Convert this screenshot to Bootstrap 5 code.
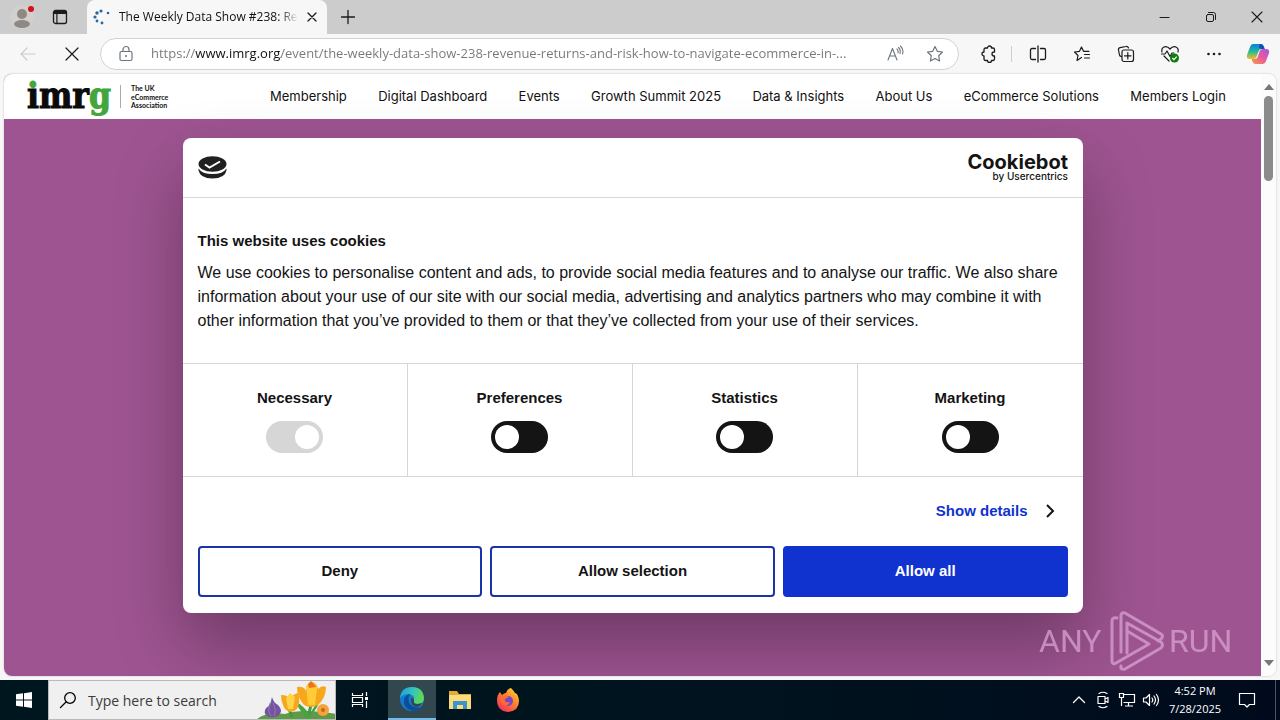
<!DOCTYPE html>
<html lang="en">
<head>
<meta charset="utf-8">
<meta name="viewport" content="width=device-width, initial-scale=1">
<title>The Weekly Data Show #238</title>
<link href="https://cdn.jsdelivr.net/npm/bootstrap@5.3.0/dist/css/bootstrap.min.css" rel="stylesheet">
<style>
  body { font-family: "Open Sans", "Noto Sans", sans-serif; font-size: 12px; background: #f7f7f7; color: #111; }
  button, input { font-family: inherit; }
  svg { display: block; flex: none; }
  .icon-btn { border: 0; background: none; padding: 0; display: flex; align-items: center; justify-content: center; color: #1b1b1b; flex: none; }
  .line { fill: none; stroke: currentColor; stroke-linecap: round; stroke-linejoin: round; }

  /* window chrome */
  .titlebar { height: 34px; background: #ccc; }
  .browser-tab { width: 240px; height: 34px; background: #f7f7f7; border-radius: 8px 8px 0 0; padding: 0 8px 0 6px; margin: 0 8px 0 19px; }
  .tab-title { width: 179px; overflow: hidden; white-space: nowrap; -webkit-mask-image: linear-gradient(90deg, #000 90%, transparent); mask-image: linear-gradient(90deg, #000 90%, transparent); }
  .win-btn { width: 46px; height: 34px; }
  .toolbar { height: 40px; }
  .address { height: 32px; border: 1px solid #d2d2d2; border-radius: 16px; background: #fff; padding: 0 14px 0 16px; margin-left: 20px; }
  .address input { border: 0; outline: 0; padding: 0; font-size: 13px; text-overflow: ellipsis; min-width: 0;
    color: transparent; background: linear-gradient(90deg, #767676 44px, #111 44px, #111 130px, #767676 130px); -webkit-background-clip: text; background-clip: text; }
  .star { margin-left: 22px; }
  .tool { width: 44px; height: 32px; }
  .tool-sep { width: 1px; height: 16px; background: #cfcfcf; }

  /* page */
  .viewport { margin: 0 4px 4px; border-radius: 8px; overflow: hidden; background: #fff; box-shadow: 0 0 2px rgba(0,0,0,.25); min-height: 0; }
  .site { background: #9e5491; overflow: hidden; }
  .site-nav { height: 45px; background: #fff; padding: 0 35px 0 22px; }
  .site-links { flex: 0 1 956px; }
  .site-links a { font-family: Inter, sans-serif; font-size: 13px; color: #111; text-decoration: none; white-space: nowrap; }
  .scroller { width: 15px; background: #fcfcfc; }
  .thumb { width: 9px; height: 85px; border-radius: 5px; background: #8b8b8b; }
  .watermark { right: 29px; bottom: 3px; color: #d9a3d2; opacity: .75; }

  /* consent dialog */
  .consent { width: 900px; max-width: 96%; background: #fff; border-radius: 8px; box-shadow: 0 32px 68px rgba(0,0,0,.3); font-family: "Liberation Sans", Arial, sans-serif; color: #141414; font-size: 15px; line-height: 24px; }
  .consent-head { height: 60px; padding: 0 15px; }
  .rule-b { border-bottom: 1px solid #d6d6d6; }
  .consent-body { padding: 31px 15px 30px; }
  .consent-body h2 { font-size: 15px; line-height: 24px; font-weight: 700; margin: 0 0 8px; }
  .consent-body p { font-size: 16px; margin: 0; }
  .choice { padding: 22px 0 23px; }
  .choice:not(:last-child) { border-right: 1px solid #d6d6d6; }
  .choice label { font-weight: 700; margin-bottom: 11px; }
  .form-switch .form-check-input.big-switch { width: 57px; height: 32px; margin: 0; float: none; border: 0; border-radius: 16px; background-color: #141414; opacity: 1;
    --bs-form-switch-bg: url("data:image/svg+xml,%3csvg xmlns='http://www.w3.org/2000/svg' viewBox='-4 -4 8 8'%3e%3ccircle r='3' fill='%23fff'/%3e%3c/svg%3e"); }
  .form-switch .form-check-input.big-switch:disabled { background-color: #d6d6d6; }
  .details { height: 69px; padding: 0 27px 0 15px; }
  .details a { color: #1032cf; font-weight: 700; text-decoration: none; }
  .consent-actions { padding: 0 15px 16px; gap: 8px; }
  .consent-actions .btn { flex: 1 1 0; height: 51px; border: 2px solid #1a33a8; border-radius: 4px; font-size: 15px; font-weight: 700; color: #141414; padding: 0; }
  .consent-actions .btn-all { background: #1032cf; border-color: #1032cf; color: #fff; }

  /* taskbar */
  .taskbar { height: 40px; background: linear-gradient(90deg, #00161f, #00131e 60%, #000a1c); color: #fff; }
  .taskbar .icon-btn { width: 48px; height: 40px; color: #fff; }
  .taskbar .running { background: #33474f; border-bottom: 2px solid #76b9ed; }
  .task-search { width: 288px; background: #f0f0f0; border: 1px solid #b9b9b9; padding-left: 10px; overflow: hidden; }
  .task-search input { border: 0; outline: 0; background: none; font-size: 14px; padding: 0; margin-left: 11px; min-width: 0; }
  .task-search input::placeholder { color: #3b3b3b; opacity: 1; }
  .taskbar .tray { width: 24px; }
  .clock { width: 64px; line-height: 18px; font-size: 11px; }
  .peek { border-left: 1px solid #4a5563; width: 5px; }
</style>
</head>
<body class="vh-100 d-flex flex-column overflow-hidden">

<header>
  <div class="titlebar d-flex align-items-center">
    <button class="icon-btn ms-2" aria-label="Profile"><svg width="28" height="30" viewBox="0 0 28 30"><circle cx="14" cy="15" r="12" fill="#d3cfcc"/><circle cx="14" cy="12" r="5" fill="#8e8985"/><ellipse cx="14" cy="22" rx="8" ry="4" fill="#8e8985"/><circle cx="23" cy="7" r="3" fill="#d80f1c"/></svg></button>
    <button class="icon-btn ms-3" aria-label="Tab actions"><svg width="16" height="16" viewBox="0 0 16 16"><rect class="line" x="1.500" y="1.500" width="13" height="13" rx="2" stroke-width="1.300"/><path d="M2 2h12v3H5.500v9H4.300V5H2z" fill="currentColor"/></svg></button>
    <div class="browser-tab d-flex align-items-center">
      <svg width="18" height="18" viewBox="0 0 18 18" fill="#2467a8"><circle cx="8" cy="3" r="1.600"/><circle cx="4" cy="5" r="1.700"/><circle cx="2" cy="9" r="1.600"/><circle cx="4" cy="13" r="1.400"/><circle cx="15" cy="5" r="1.300"/><circle cx="9" cy="15" r="1.400"/></svg>
      <span class="tab-title ms-2">The Weekly Data Show #238: Reve</span>
      <button class="icon-btn ms-2" aria-label="Close tab"><svg width="12" height="12" viewBox="0 0 12 12"><path class="line" stroke-width="1.300" d="M2 2l8 8M10 2l-8 8"/></svg></button>
    </div>
    <button class="icon-btn ms-1" aria-label="New tab"><svg width="18" height="18" viewBox="0 0 18 18"><path class="line" stroke-width="1.300" d="M9 2.500v13M2.500 9h13"/></svg></button>
    <div class="d-flex ms-auto">
      <button class="icon-btn win-btn" aria-label="Minimize"><svg width="12" height="12" viewBox="0 0 12 12"><path class="line" d="M1 6.500h9"/></svg></button>
      <button class="icon-btn win-btn" aria-label="Restore"><svg width="12" height="12" viewBox="0 0 12 12"><g class="line"><rect x="1.500" y="3.500" width="7" height="7" rx="1.500"/><path d="M3.500 1.500H8.500a2 2 0 0 1 2 2V8.500"/></g></svg></button>
      <button class="icon-btn win-btn" aria-label="Close"><svg width="12" height="12" viewBox="0 0 12 12"><path class="line" stroke-width="1.100" d="M1 1l10 10M11 1L1 11"/></svg></button>
    </div>
  </div>
  <div class="toolbar d-flex align-items-center">
    <button class="icon-btn ms-3" aria-label="Back"><svg width="24" height="20" viewBox="0 0 24 20"><path fill="none" stroke="#cbcbcb" stroke-linecap="round" stroke-width="1.200" d="M19 10H5M11 4l-6 6 6 6"/></svg></button>
    <button class="icon-btn ms-4" aria-label="Stop"><svg width="16" height="16" viewBox="0 0 16 16"><path class="line" stroke-width="1.200" d="M2 2l12 12M14 2L2 14"/></svg></button>
    <div class="address d-flex align-items-center flex-grow-1">
      <svg class="text-secondary" width="18" height="18" viewBox="0 0 18 18"><g class="line" stroke-width="1.200"><rect x="3" y="6.500" width="12" height="9" rx="1.500"/><path d="M6 6.500V4.500a3 3 0 0 1 6 0v2"/></g><circle cx="9" cy="11" r="1" fill="currentColor"/></svg>
      <input class="flex-grow-1 ms-3" type="text" aria-label="Address" value="https://www.imrg.org/event/the-weekly-data-show-238-revenue-returns-and-risk-how-to-navigate-ecommerce-in-...">
      <button class="icon-btn text-secondary ms-2" aria-label="Read aloud"><svg width="18" height="18" viewBox="0 0 18 18"><path class="line" stroke-width="1.100" d="M2 15L6.500 3.500 11 15M3.500 11h6M11 4q1.500 1.500 1 4M12.500 2.500q2.500 2 1.500 6M14.500 1q3.500 3.500 2 8"/></svg></button>
      <button class="icon-btn text-secondary star" aria-label="Favorite"><svg width="18" height="18" viewBox="0 0 18 18"><path class="line" stroke-width="1.200" d="M9 1.500l2.300 4.800 5.200.7-3.800 3.700.9 5.300L9 13.500 4.400 16l.9-5.300L1.500 7l5.200-.7z"/></svg></button>
    </div>
    <button class="icon-btn tool ms-2" aria-label="Extensions"><svg width="18" height="18" viewBox="0 0 18 18"><path class="line" stroke-width="1.300" d="M5.500 3h2a2 2 0 0 1 4 0H13a1.500 1.500 0 0 1 1.500 1.500V7H14a2 2 0 0 0 0 4h.5v3a1.500 1.500 0 0 1-1.500 1.500h-1.500a2 2 0 0 1-4 0h-2A1.500 1.500 0 0 1 4 14v-3a2 2 0 0 1 0-4V4.500A1.500 1.500 0 0 1 5.500 3z"/></svg></button>
    <span class="tool-sep"></span>
    <button class="icon-btn tool ms-1" aria-label="Split screen"><svg width="18" height="18" viewBox="0 0 18 18"><path class="line" stroke-width="1.300" d="M9 1v16M6.500 3.500H3a1.500 1.500 0 0 0-1.500 1.500v8A1.500 1.500 0 0 0 3 14.500h3.500M11.500 3.500H15A1.500 1.500 0 0 1 16.500 5v8a1.500 1.500 0 0 1-1.500 1.500h-3.500"/></svg></button>
    <button class="icon-btn tool" aria-label="Favorites"><svg width="18" height="18" viewBox="0 0 18 18"><path class="line" stroke-width="1.200" d="M8.500 12.500L4 15.500l1-5L1.500 7l5-.7L8.500 2l2 4.300H16M11.500 9.500h5M11.500 13h5"/></svg></button>
    <button class="icon-btn tool" aria-label="Collections"><svg width="18" height="18" viewBox="0 0 18 18"><path class="line" stroke-width="1.200" d="M4.500 11.500a2 2 0 0 1-2-1.500L1.500 5a2 2 0 0 1 1.500-2.300l6-1.200A2 2 0 0 1 11.500 3M7 5h7.500A2 2 0 0 1 16.500 7v7.500a2 2 0 0 1-2 2H7a2 2 0 0 1-2-2V7a2 2 0 0 1 2-2zM10.800 7.500v6.500M7.500 10.800H14"/></svg></button>
    <button class="icon-btn tool" aria-label="Browser essentials"><svg width="20" height="18" viewBox="0 0 20 18"><path class="line" stroke-width="1.200" d="M2 7Q1 3 4.500 1.800 7.500 1 10 4q2.500-3 5.500-2.200Q19 3 18 7M1.500 9H5l2-3 3 5.500L12 8h2M4 11l5 5"/><circle cx="14.500" cy="13" r="4.500" fill="#107c10"/><path d="M12.300 13l1.600 1.600 2.800-3" fill="none" stroke="#fff" stroke-width="1.200"/></svg></button>
    <button class="icon-btn tool" aria-label="Settings and more"><svg width="16" height="16" viewBox="0 0 16 16" fill="currentColor"><circle cx="2.500" cy="8" r="1.300"/><circle cx="8" cy="8" r="1.300"/><circle cx="13.500" cy="8" r="1.300"/></svg></button>
    <button class="icon-btn tool" aria-label="Copilot"><svg width="24" height="22" viewBox="0 0 24 22"><defs><linearGradient id="cpA" x1="0" y1="0" x2="0" y2="1"><stop offset="0" stop-color="#0a7fe0"/><stop offset=".5" stop-color="#25b99a"/><stop offset="1" stop-color="#f4c21c"/></linearGradient><linearGradient id="cpB" x1="1" y1="0" x2="0" y2="1"><stop offset="0" stop-color="#a257e8"/><stop offset=".5" stop-color="#ea5a9b"/><stop offset="1" stop-color="#fb9a4a"/></linearGradient></defs><path fill="url(#cpA)" d="M7 1h8q2 0 3 3l.6 2h-3.200q-2 0-2.700 2L10.500 14q-.8 2-3 2H4q-4 0-3-4L4 4q1-3 3-3z"/><path fill="url(#cpB)" d="M17 21H9q-2 0-2.700-3L5.700 16h3.300q2 0 2.700-2L13.700 8q.8-2 3-2H20q4 0 3 4l-3 8q-1 3-3 3z"/><path fill="#174eb5" d="M14 1h1q2 0 3 3l.6 2h-3.200q-2 0-2.600-2z"/></svg></button>
  </div>
</header>

<main class="viewport d-flex flex-grow-1">
  <div class="site position-relative flex-grow-1">
    <nav class="site-nav d-flex align-items-center justify-content-between" aria-label="Main">
      <a href="#" aria-label="imrg home"><svg width="160" height="45" viewBox="0 0 160 45"><defs><linearGradient id="dotFill" gradientUnits="userSpaceOnUse" x1="0" y1="0" x2="0" y2="45"><stop offset=".32" stop-color="#43a63c"/><stop offset=".32" stop-color="#0b0b0b"/></linearGradient></defs><g font-family="DejaVu Serif Condensed, DejaVu Serif, serif" font-weight="700" font-size="35" stroke-width="1"><text x="1" y="34"><tspan fill="url(#dotFill)" stroke="url(#dotFill)">imr</tspan><tspan fill="#43a63c" stroke="#43a63c">g</tspan></text></g><path d="M94.500 11v23" stroke="#aaa"/><g font-family="Lato, sans-serif" font-weight="700" font-size="7" fill="#111"><text x="105" y="17">The UK</text><text x="105" y="26">eCommerce</text><text x="105" y="34">Association</text></g></svg></a>
      <div class="site-links d-flex justify-content-between">
        <a href="#">Membership</a><a href="#">Digital Dashboard</a><a href="#">Events</a><a href="#">Growth Summit 2025</a><a href="#">Data &amp; Insights</a><a href="#">About Us</a><a href="#">eCommerce Solutions</a><a href="#">Members Login</a>
      </div>
    </nav>

    <div class="position-absolute top-0 start-0 w-100 h-100 d-flex align-items-center justify-content-center">
      <section class="consent" role="dialog" aria-labelledby="consentTitle">
        <div class="consent-head rule-b d-flex align-items-center justify-content-between">
          <svg width="29" height="23" viewBox="0 0 29 23"><ellipse cx="14.500" cy="8" rx="14" ry="7.700" fill="#202020"/><path d="M.5 12.500Q4 18 14.500 18T28.500 12.500v1.800Q27 22.500 14.500 22.500T.5 14.300z" fill="#202020"/><path d="M7 8.500l4.500 3L22 5.500" fill="none" stroke="#fff" stroke-width="2"/></svg>
          <svg width="108" height="34" viewBox="0 0 108 34" fill="#141414" font-family="Inter, sans-serif" text-anchor="end"><text x="108" y="19" font-size="20" font-weight="700">Cookiebot</text><text x="108" y="30" font-size="10" font-weight="500">by Usercentrics</text></svg>
        </div>
        <div class="consent-body rule-b">
          <h2 id="consentTitle">This website uses cookies</h2>
          <p>We use cookies to personalise content and ads, to provide social media features and to analyse our traffic. We also share information about your use of our site with our social media, advertising and analytics partners who may combine it with other information that you’ve provided to them or that they’ve collected from your use of their services.</p>
        </div>
        <div class="row g-0 rule-b text-center">
          <div class="choice col-3 form-switch d-flex flex-column align-items-center"><label for="swN">Necessary</label><input class="form-check-input big-switch" type="checkbox" role="switch" id="swN" checked disabled></div>
          <div class="choice col-3 form-switch d-flex flex-column align-items-center"><label for="swP">Preferences</label><input class="form-check-input big-switch" type="checkbox" role="switch" id="swP"></div>
          <div class="choice col-3 form-switch d-flex flex-column align-items-center"><label for="swS">Statistics</label><input class="form-check-input big-switch" type="checkbox" role="switch" id="swS"></div>
          <div class="choice col-3 form-switch d-flex flex-column align-items-center"><label for="swM">Marketing</label><input class="form-check-input big-switch" type="checkbox" role="switch" id="swM"></div>
        </div>
        <div class="details d-flex align-items-center justify-content-end">
          <a href="#" class="d-flex align-items-center">Show details<svg class="ms-3" width="12" height="16" viewBox="0 0 12 16"><path d="M3 2l6 6-6 6" fill="none" stroke="#141414" stroke-width="2"/></svg></a>
        </div>
        <div class="consent-actions d-flex">
          <button class="btn">Deny</button><button class="btn">Allow selection</button><button class="btn btn-all">Allow all</button>
        </div>
      </section>
    </div>

    <div class="watermark position-absolute"><svg width="194" height="64" viewBox="0 0 194 64"><g fill="currentColor" font-family="Roboto, sans-serif" font-size="32"><text x="1" y="43">ANY</text><text x="131" y="43">RUN</text></g><g fill="none" stroke="currentColor" stroke-width="3" stroke-linejoin="round" stroke-linecap="round"><path d="M83 43V6q1-3 4-2l36 21q3 2 0 5l-3 2"/><path d="M79 9q-5-1-5 3v41q1 3 4 1l33-19-22-13"/><path d="M83 57q-1 4 4 3l36-21q3-3 0-6L89 14v30"/></g></svg></div>
  </div>
  <div class="scroller d-flex flex-column align-items-center py-2">
    <svg width="10" height="10" viewBox="0 0 10 10"><path d="M0 8l5-6 5 6z" fill="#777"/></svg>
    <div class="thumb mt-1"></div>
    <svg class="mt-auto" width="10" height="10" viewBox="0 0 10 10"><path d="M0 2l5 6 5-6z" fill="#777"/></svg>
  </div>
</main>

<footer class="taskbar d-flex flex-shrink-0">
  <button class="icon-btn" aria-label="Start"><svg width="16" height="16" viewBox="0 0 16 16" fill="#fff"><path d="M0 2.300l7-1v6.200H0zM8 1.200L16 0v7.500H8zM0 8.500h7v6.200l-7-1zM8 8.500h8V16l-8-1.200z"/></svg></button>
  <div class="task-search d-flex align-items-center">
    <svg class="text-black" width="18" height="18" viewBox="0 0 18 18"><g class="line" stroke-width="1.300"><circle cx="11" cy="7" r="5.300"/><path d="M7 11L1.500 16.500"/></g></svg>
    <input class="flex-grow-1" type="text" placeholder="Type here to search" aria-label="Search">
    <svg width="78" height="38" viewBox="0 0 78 38"><path d="M0 38q10-8 28-5 16-6 52 0v5z" fill="#5f9a49"/><path d="M35 36l-5-14M51 36L55 20" stroke="#3f9a3a" stroke-width="3"/><path d="M38 20q6 12 12 17 9-6 12-16-7 6-9 13-6-9-15-14z" fill="#45a346"/><path d="M15 16q1 5 6 8 6 6 0 11-8 3-12-1-4-5 4-10z" fill="#74549f"/><path d="M13 22q-3 8 1 13M16 22q4 7 1 13" stroke="#9677bd" fill="none"/><path d="M24 14q7 0 9 4 3-5 8-6 3 10-1 16-6 6-12 0-4-7-4-14z" fill="#f5a81c"/><path d="M29 17l4-5 5 4-2 12h-5z" fill="#ffd447"/><path d="M40 6q7-1 9 4 2-9 6-9 5 1 6 7 4-4 8-2 0 11-8 18-7 4-14 0-7-8-7-18z" fill="#f6a71a"/><path d="M49 5q4-4 5-4 6 2 6 7l-2 16h-7z" fill="#ffcb36"/><path d="M51 3l3-3 3 3 2 3-7 1z" fill="#ed741e"/><circle cx="66" cy="29" r="6" fill="#f5a33b"/><circle cx="66" cy="29" r="2" fill="#cc6417"/></svg>
  </div>
  <button class="icon-btn" aria-label="Task view"><svg width="18" height="18" viewBox="0 0 18 18"><path fill="none" stroke="#fff" stroke-width="1.200" d="M1.500 2v2.500h10V2M1.500 16v-2.500h10V16M1.500 6.500h10v5h-10zM15.500 1v4M15.500 10v7"/><rect x="14" y="6" width="3" height="3" fill="#fff"/></svg></button>
  <button class="icon-btn running ms-1" aria-label="Edge"><svg width="26" height="26" viewBox="0 0 26 26"><defs><linearGradient id="eg" x1="0" y1="0" x2="1" y2=".3"><stop offset="0" stop-color="#1a9de0"/><stop offset=".6" stop-color="#36c7b5"/><stop offset="1" stop-color="#60d857"/></linearGradient></defs><circle cx="13" cy="13" r="12" fill="#1779cb"/><path d="M1 12Q2 1 13 1t12 11q0 6-7 6-5 0-3-4 1-5-5-6-6 0-9 4z" fill="url(#eg)"/><path d="M10 8q-6 3-5 9t9 8q5 0 9-4-8 2-12-3-3-5 0-10z" fill="#0b4e9c"/><path d="M12 12q3 0 3 3-1 3 4 3l4-1q-2 4-6 4-6-2-5-9z" fill="#33474f"/></svg></button>
  <button class="icon-btn" aria-label="File Explorer"><svg width="24" height="22" viewBox="0 0 24 22"><path d="M1 2h8l2 3h12v15H1z" fill="#e3a93b"/><path d="M1 6h22v14H1z" fill="#fbdc7a"/><path d="M5 20v-8h14v8h-4v-4H9v4z" fill="#3b94d0"/></svg></button>
  <button class="icon-btn" aria-label="Firefox"><svg width="24" height="24" viewBox="0 0 24 24"><defs><linearGradient id="fx" x1="1" y1="0" x2=".2" y2="1"><stop offset="0" stop-color="#ffe43d"/><stop offset=".45" stop-color="#ff8a25"/><stop offset="1" stop-color="#f12c62"/></linearGradient></defs><path fill="url(#fx)" d="M15 0q3 3 4 5l2 1q2 4 2 7 0 10-11 11Q1 23 1 12q0-5 3-8l2 3q2-2 4-2 1-4 5-5z"/><circle cx="12" cy="13" r="5" fill="#7645d0"/><path d="M5 8q5-2 8 1l-4 2q-1 4 5 3-2 5-7 3-4-4-2-9z" fill="#fc6b35"/></svg></button>

  <div class="d-flex ms-auto">
    <button class="icon-btn tray" aria-label="Show hidden icons"><svg width="14" height="14" viewBox="0 0 14 14"><path class="line" stroke-width="1.300" d="M1.500 9.500L7 4l5.500 5.500"/></svg></button>
    <button class="icon-btn tray" aria-label="Meet now"><svg width="14" height="18" viewBox="0 0 14 18"><path class="line" stroke-width="1.200" d="M2 5.500h7v7H2zM9 8l3-1.500v5L9 10M3 2.500q4-2.500 8 0M3 15.500q4 2.500 8 0"/></svg></button>
    <button class="icon-btn tray" aria-label="Network"><svg width="18" height="16" viewBox="0 0 18 16"><path fill="none" stroke="#fff" stroke-width="1.200" d="M5.500 2.500h11v8h-11M10.500 10.500v3.500M7 14h8M1.500 1.500h4v4h-4zM3.500 5.500v8.500"/></svg></button>
    <button class="icon-btn tray" aria-label="Volume"><svg width="18" height="16" viewBox="0 0 18 16"><path class="line" stroke-width="1.200" d="M1.500 6h2.500l3.500-3.500v11L4 10H1.500zM10 6q1.500 2 0 4M12 4q3 4 0 8M14.500 2.500q4 5.500 0 11"/></svg></button>
    <div class="clock text-center align-self-center">4:52 PM<br>7/28/2025</div>
    <button class="icon-btn tray mx-2" aria-label="Notifications"><svg width="18" height="18" viewBox="0 0 18 18"><path class="line" stroke-width="1.200" d="M1.500 2.500h15v11h-5L9 16l-2.500-2.500h-5z"/></svg></button>
    <div class="peek ms-2"></div>
  </div>
</footer>

<script src="https://cdn.jsdelivr.net/npm/bootstrap@5.3.0/dist/js/bootstrap.bundle.min.js"></script>
</body>
</html>
